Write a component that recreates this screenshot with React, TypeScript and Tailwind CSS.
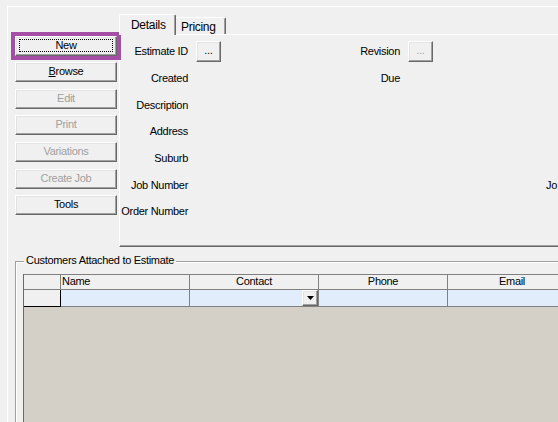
import React from "react";

type Btn = { label: string; ul?: boolean; disabled?: boolean; focused?: boolean; mt: string };

const buttons: Btn[] = [
  { label: "New", focused: true, mt: "mt-0" },
  { label: "Browse", ul: true, mt: "mt-[6px]" },
  { label: "Edit", disabled: true, mt: "mt-[7px]" },
  { label: "Print", disabled: true, mt: "mt-[6px]" },
  { label: "Variations", disabled: true, mt: "mt-[7px]" },
  { label: "Create Job", disabled: true, mt: "mt-[7px]" },
  { label: "Tools", mt: "mt-[6px]" },
];

const raised =
  "bg-[#f0f0f0] border border-t-white border-l-white border-r-[#696969] border-b-[#696969] shadow-[inset_-1px_-1px_0_#a0a0a0,inset_1px_1px_0_#e3e3e3]";

function WinButton({ b }: { b: Btn }) {
  return (
    <button
      className={`relative shrink-0 h-[20px] w-[102px] flex items-center justify-center pb-[2px] ${raised} ${b.mt} ${
        b.focused ? "outline-[4px] outline-solid outline-[#a54ea5]" : ""
      } ${b.disabled ? "text-[#a0a0a0]" : "text-black"}`}
    >
      {b.focused && <span className="absolute left-[3px] right-[3px] top-[2px] bottom-[3px] border border-dotted border-black" />}
      {b.ul ? (
        <span>
          <span className="underline underline-offset-[1px]">{b.label[0]}</span>
          {b.label.slice(1)}
        </span>
      ) : (
        b.label
      )}
    </button>
  );
}

function DotsButton({ disabled }: { disabled?: boolean }) {
  return (
    <div
      className={`shrink-0 h-[21px] w-[25px] ml-[8px] flex items-center justify-center pb-[3px] ${raised} ${
        disabled ? "text-[#a0a0a0]" : "text-black"
      }`}
    >
      ...
    </div>
  );
}

// one line of the Details page: left label, slot, right label, slot
function FormRow({
  left,
  right,
  leftBtn,
  rightBtn,
  extra,
  cls,
}: {
  left: string;
  right?: string;
  leftBtn?: boolean;
  rightBtn?: boolean;
  extra?: string;
  cls: string;
}) {
  return (
    <div className={`flex items-center ${cls}`}>
      <div className="w-[68px] shrink-0 text-right whitespace-nowrap">{left}</div>
      <div className="w-[33px] shrink-0 flex">{leftBtn && <DotsButton />}</div>
      <div className="w-[179px] shrink-0 text-right whitespace-nowrap">{right}</div>
      <div className="w-[32px] shrink-0 flex">{rightBtn && <DotsButton disabled />}</div>
      {extra && <div className="ml-[114px] shrink-0 whitespace-nowrap">{extra}</div>}
    </div>
  );
}

function TabControl() {
  return (
    <div className="flex-1 flex flex-col min-w-0 overflow-hidden">
      <div className="h-[27px] flex items-end text-[12px] leading-[14px]">
        <div className="relative z-10 shrink-0 h-[21px] w-[57px] mb-[-1px] pl-[11px] pt-[3px] bg-[#f0f0f0] border-t border-l border-r border-t-white border-l-white border-r-[#696969] rounded-tl-[2px] rounded-tr-[2px] shadow-[inset_-1px_0_0_#a0a0a0]">
          Details
        </div>
        <div className="shrink-0 h-[17px] w-[50px] pl-[5px] pt-[2px] bg-[#f0f0f0] border-t border-r border-t-white border-r-[#696969] rounded-tr-[2px] shadow-[inset_-1px_0_0_#a0a0a0]">
          Pricing
        </div>
      </div>
      <div className="h-[213px] border-t border-l border-t-white border-l-white border-b border-b-[#696969] shadow-[inset_0_-1px_0_#a0a0a0] pt-[6px] leading-[13px]">
        <FormRow cls="h-[21px]" left="Estimate ID" leftBtn right="Revision" rightBtn />
        <FormRow cls="h-[20px] mt-[6px]" left="Created" right="Due" />
        <FormRow cls="h-[20px] mt-[7px]" left="Description" />
        <FormRow cls="h-[20px] mt-[6px]" left="Address" />
        <FormRow cls="h-[20px] mt-[7px]" left="Suburb" />
        <FormRow cls="h-[20px] mt-[7px]" left="Job Number" extra="Jo" />
        <FormRow cls="h-[20px] mt-[6px]" left="Order Number" />
      </div>
    </div>
  );
}

const cols = ["Name", "Contact", "Phone", "Email"];

function CustomerGrid() {
  return (
    <div className="ml-[6px] mt-[11px] flex-1 flex flex-col border-l border-[#696969] bg-[#d4d0c8]">
      {/* header */}
      <div className="flex h-[16px] border-t border-b border-[#808080] bg-[#f0f0f0] leading-[13px]">
        <div className="w-[37px] shrink-0 border-r border-[#808080]" />
        {cols.map((c) => (
          <div
            key={c}
            className={`w-[129px] shrink-0 border-r border-[#808080] ${c === "Name" ? "pl-[1px] text-left" : "text-center"}`}
          >
            {c}
          </div>
        ))}
      </div>
      {/* current row */}
      <div className="flex h-[17px]">
        <div className="w-[37px] shrink-0 bg-[#f0f0f0] border-r border-b border-black" />
        {cols.map((c) => (
          <div key={c} className="w-[129px] shrink-0 bg-[#e2edfc] border-r border-b border-[#808080] flex justify-end">
            {c === "Contact" && (
              <div className={`h-[16px] w-[16px] flex items-center justify-center ${raised}`}>
                <svg width="7" height="4" viewBox="0 0 7 4">
                  <path d="M0 0H7L3.5 4Z" fill="#000" />
                </svg>
              </div>
            )}
          </div>
        ))}
      </div>
    </div>
  );
}

export default function App() {
  return (
    <div className="w-[558px] h-[422px] overflow-hidden bg-[#f0f0f0] pt-[6px] pl-[7px] font-['Liberation_Sans',Arial,sans-serif] text-[11px] tracking-[-0.3px] text-black">
      <div className="h-full border-t border-l border-white flex flex-col">
        <div className="flex h-[240px] shrink-0">
          <div className="w-[111px] shrink-0 pl-[7px] pt-[29px] flex flex-col">
            {buttons.map((b) => (
              <WinButton key={b.label} b={b} />
            ))}
          </div>
          <TabControl />
        </div>

        {/* Customers group box */}
        <div className="relative ml-[7px] mt-[14px] flex-1 flex flex-col border-t border-l border-[#a0a0a0]">
          <div className="flex-1 flex flex-col border-t border-l border-white">
            <span className="absolute left-[8px] top-[-8px] px-[2px] bg-[#f0f0f0] leading-[13px] whitespace-nowrap">
              Customers Attached to Estimate
            </span>
            <CustomerGrid />
          </div>
        </div>
      </div>
    </div>
  );
}
